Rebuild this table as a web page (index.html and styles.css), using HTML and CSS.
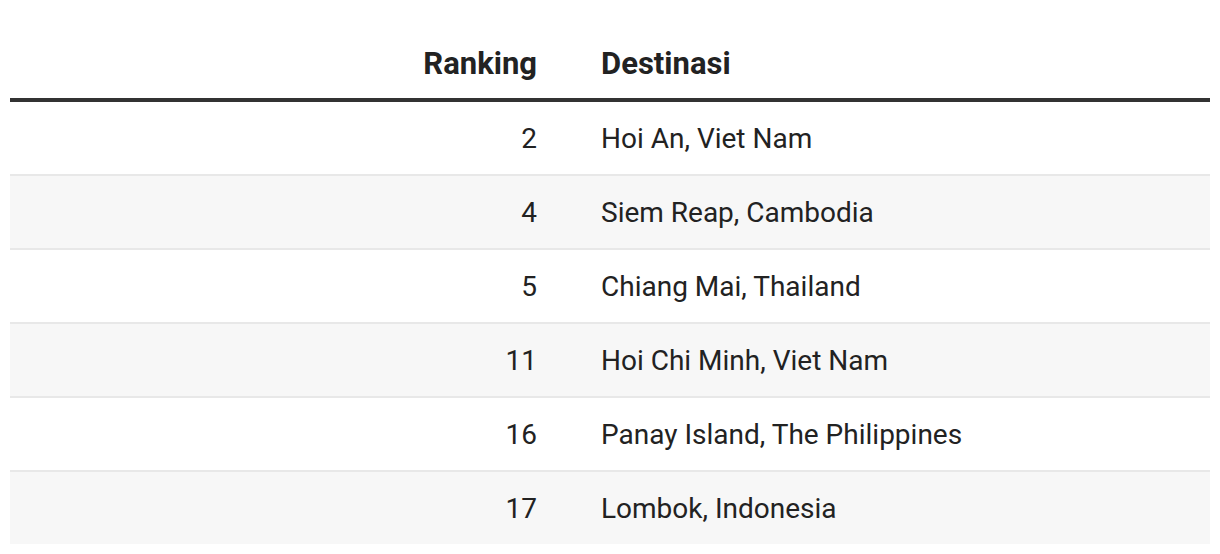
FILE: index.html
```html
<!DOCTYPE html>
<html lang="id">
<head>
<meta charset="utf-8">
<title>Ranking Destinasi</title>
<link rel="stylesheet" href="styles.css">
</head>
<body>
<div class="wrap">
<table class="rank-table">
  <thead>
    <tr>
      <th class="col-rank">Ranking</th>
      <th class="col-dest">Destinasi</th>
    </tr>
  </thead>
  <tbody>
    <tr><td class="col-rank">2</td><td class="col-dest">Hoi An, Viet Nam</td></tr>
    <tr class="striped"><td class="col-rank">4</td><td class="col-dest">Siem Reap, Cambodia</td></tr>
    <tr><td class="col-rank">5</td><td class="col-dest">Chiang Mai, Thailand</td></tr>
    <tr class="striped"><td class="col-rank">11</td><td class="col-dest">Hoi Chi Minh, Viet Nam</td></tr>
    <tr><td class="col-rank">16</td><td class="col-dest">Panay Island, The Philippines</td></tr>
    <tr class="striped"><td class="col-rank">17</td><td class="col-dest">Lombok, Indonesia</td></tr>
  </tbody>
</table>
</div>
</body>
</html>
```

FILE: styles.css
```css
html, body {
  margin: 0;
  padding: 0;
  background: #ffffff;
}

.wrap {
  padding: 0 10px;
}

.rank-table {
  width: 100%;
  border-collapse: separate;
  border-spacing: 0;
  font-family: Roboto, "Liberation Sans", Arial, sans-serif;
  font-size: 28px;
  color: #222222;
  table-layout: fixed;
}

.rank-table th {
  font-size: 31px;
  font-weight: 700;
  line-height: 30px;
  padding: 49px 10px 19px 10px;
  border-bottom: 4px solid #333333;
  color: #222222;
}

.rank-table td {
  line-height: 30px;
  padding: 22px 10px 20px 10px;
  border-top: 2px solid #e8e8e8;
}

.rank-table tbody tr:first-child td {
  border-top: none;
}

.rank-table .col-rank {
  width: 517px;
  text-align: right;
}

.rank-table .col-dest {
  text-align: left;
  padding-left: 54px;
}

.rank-table tr.striped td {
  background: #f7f7f7;
}
```
